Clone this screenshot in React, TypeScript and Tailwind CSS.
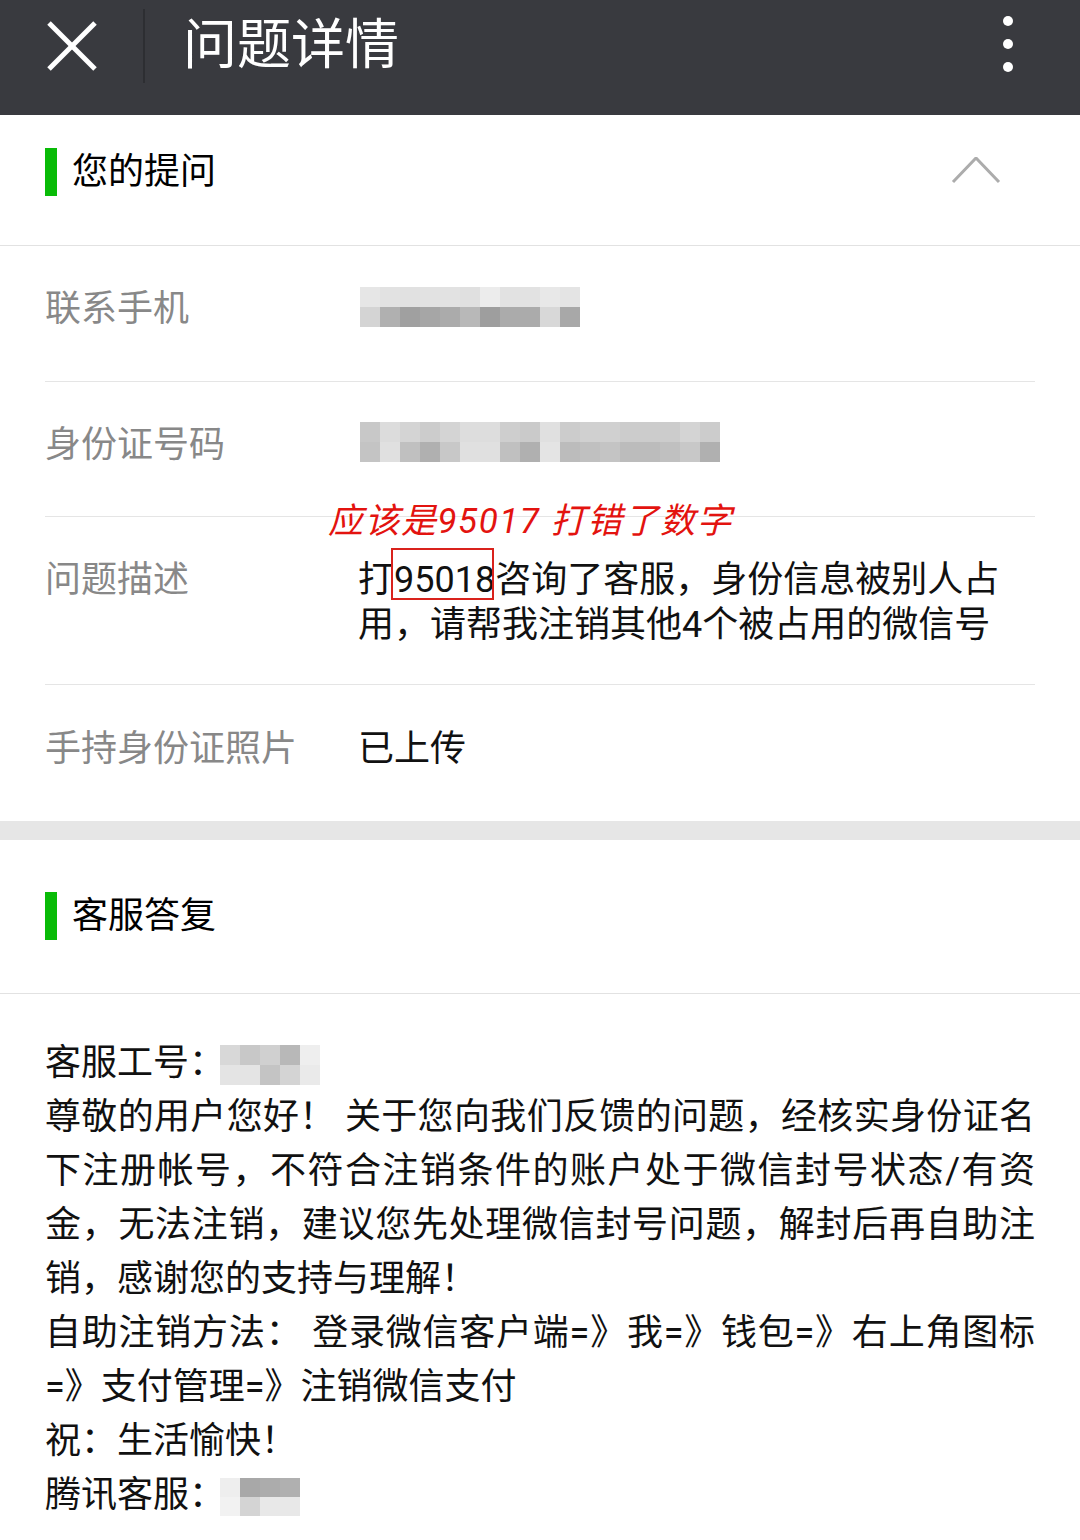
import React from "react";

function Pixels({ rows, cell, cellH }: { rows: string[][]; cell: number; cellH: number }) {
  return (
    <span className="inline-flex flex-col align-middle">
      {rows.map((r, i) => (
        <span key={i} className="flex">
          {r.map((c, j) => (
            <span
              key={j}
              className="block"
              style={{ width: cell, height: cellH, backgroundColor: `#${c}${c}${c}` }}
            />
          ))}
        </span>
      ))}
    </span>
  );
}

const phone = [
  ["e6", "e2", "e1", "e2", "e2", "e0", "ec", "e2", "e2", "e8", "e4"],
  ["d4", "b0", "a0", "a6", "ab", "b8", "9e", "ab", "ab", "d8", "a8"],
];
const idcard = [
  ["c8", "dc", "d4", "cc", "d4", "dd", "dd", "ce", "ca", "e0", "cc", "d0", "d0", "cc", "cc", "cc", "d4", "cc"],
  ["c4", "e0", "c0", "b0", "c8", "e0", "e0", "c0", "b0", "e4", "bc", "c0", "c4", "bc", "bc", "c0", "c8", "b0"],
];
const agent = [
  ["d8", "c8", "d0", "b8", "ee"],
  ["e4", "e4", "c4", "d4", "ea"],
];
const tencent = [
  ["ee", "a8", "ac", "b0"],
  ["f2", "d4", "e8", "e8"],
];

function SectionTitle({ title }: { title: string }) {
  return (
    <div className="flex items-center">
      <div className="w-[12px] h-[48px] bg-[#09bb07]" />
      <div className="ml-[15px] text-[36px] leading-[48px] text-black">{title}</div>
    </div>
  );
}

export default function App() {
  return (
    <div className="w-[1080px] min-h-[1540px] bg-white font-['Roboto','Noto_Sans_CJK_SC',sans-serif]">
      {/* Top bar */}
      <div className="h-[115px] bg-[#393a3f]">
        <div className="h-[92px] flex items-center">
          <svg className="ml-[47px]" width="50" height="50" viewBox="0 0 50 50">
            <line x1="2" y1="2" x2="48" y2="48" stroke="#fff" strokeWidth="5" />
            <line x1="48" y1="2" x2="2" y2="48" stroke="#fff" strokeWidth="5" />
          </svg>
          <div className="ml-[46px] w-[2px] h-[74px] bg-[#2d2e32]" />
          <div className="ml-[38px] text-[54px] leading-[64px] text-white">问题详情</div>
          <svg className="ml-auto mr-[67px] -mt-[4px]" width="10" height="56" viewBox="0 0 10 56">
            <circle cx="5" cy="5" r="5" fill="#fff" />
            <circle cx="5" cy="28" r="5" fill="#fff" />
            <circle cx="5" cy="51" r="5" fill="#fff" />
          </svg>
        </div>
      </div>

      {/* Your question header */}
      <div className="h-[131px] flex items-center pl-[45px] pb-[16px] border-b border-[#e2e2e2]">
        <SectionTitle title="您的提问" />
        <svg className="ml-auto mr-[79px]" width="50" height="30" viewBox="0 0 50 30">
          <polyline points="2,25 25,1 48,25" fill="none" stroke="#acacac" strokeWidth="3" />
        </svg>
      </div>

      {/* Rows */}
      <div className="px-[45px]">
        <div className="h-[136px] flex items-center pb-[8px] border-b border-[#e5e5e5]">
          <div className="w-[315px] text-[36px] leading-[45px] text-[#888888]">联系手机</div>
          <span className="-mt-[6px]">
            <Pixels rows={phone} cell={20} cellH={20} />
          </span>
        </div>
        <div className="h-[135px] flex items-center pb-[8px] border-b border-[#e5e5e5]">
          <div className="w-[315px] text-[36px] leading-[45px] text-[#888888]">身份证号码</div>
          <span className="-mt-[6px]">
            <Pixels rows={idcard} cell={20} cellH={20} />
          </span>
        </div>
        <div className="relative h-[168px] flex items-start pt-[41px] border-b border-[#e5e5e5]">
          <div className="w-[313px] shrink-0 text-[36px] leading-[45px] text-[#888888]">问题描述</div>
          <div className="w-[650px] text-[36px] leading-[45px] text-[#111111]">
            打
            <span className="relative">
              95018
              <span className="absolute left-[-3px] right-[1px] top-[-11px] bottom-[1px] border-[2px] border-[#d9221c]" />
            </span>
            咨询了客服，身份信息被别人占用，请帮我注销其他4个被占用的微信号
          </div>
          <div className="absolute left-[283px] top-[-15px] text-[35px] leading-[40px] italic font-normal tracking-[1.5px] text-[#e3130f] whitespace-nowrap">
            应该是95017 打错了数字
          </div>
        </div>
        <div className="h-[136px] flex items-center pb-[8px]">
          <div className="w-[313px] text-[36px] leading-[45px] text-[#888888]">手持身份证照片</div>
          <div className="text-[36px] leading-[45px] text-[#111111]">已上传</div>
        </div>
      </div>

      <div className="h-[19px] bg-[#e6e6e6]" />

      {/* Reply header */}
      <div className="h-[154px] flex items-center pl-[45px] pb-[2px] border-b border-[#e2e2e2]">
        <SectionTitle title="客服答复" />
      </div>

      {/* Reply body */}
      <div className="px-[45px] pt-[42px] text-[36px] leading-[54px] text-[#111111] text-justify">
        <p>
          客服工号：
          <span className="-ml-[5px]">
            <Pixels rows={agent} cell={20} cellH={20} />
          </span>
        </p>
        <p>尊敬的用户您好！ 关于您向我们反馈的问题，经核实身份证名下注册帐号，不符合注销条件的账户处于微信封号状态/有资金，无法注销，建议您先处理微信封号问题，解封后再自助注销，感谢您的支持与理解！</p>
        <p>自助注销方法： 登录微信客户端=》我=》钱包=》右上角图标=》支付管理=》注销微信支付</p>
        <p>祝：生活愉快！</p>
        <p>
          腾讯客服：
          <span className="-ml-[5px]">
            <Pixels rows={tencent} cell={20} cellH={19} />
          </span>
        </p>
      </div>
    </div>
  );
}
